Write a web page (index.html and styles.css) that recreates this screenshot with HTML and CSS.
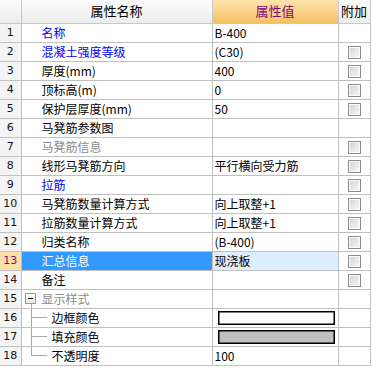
FILE: index.html
```html
<!DOCTYPE html>
<html>
<head>
    <title>属性编辑</title>
    <link rel="stylesheet" href="styles.css">
</head>
<body>
    <table class="grid">
        <colgroup>
            <col class="c-no">
            <col class="c-name">
            <col class="c-val">
            <col class="c-add">
        </colgroup>
        <thead>
            <tr>
                <th class="h-no"></th>
                <th class="h-name">属性名称</th>
                <th class="h-val">属性值</th>
                <th class="h-add">附加</th>
            </tr>
        </thead>
        <tbody>
            <tr><td class="no">1</td><td class="name blue">名称</td><td class="val">B-400</td><td class="add"></td></tr>
            <tr><td class="no">2</td><td class="name blue">混凝土强度等级</td><td class="val">(C30)</td><td class="add"><span class="chk"></span></td></tr>
            <tr><td class="no">3</td><td class="name">厚度(mm)</td><td class="val">400</td><td class="add"><span class="chk"></span></td></tr>
            <tr><td class="no">4</td><td class="name">顶标高(m)</td><td class="val">0</td><td class="add"><span class="chk"></span></td></tr>
            <tr><td class="no">5</td><td class="name">保护层厚度(mm)</td><td class="val">50</td><td class="add"><span class="chk"></span></td></tr>
            <tr><td class="no">6</td><td class="name">马凳筋参数图</td><td class="val"></td><td class="add"></td></tr>
            <tr><td class="no">7</td><td class="name gray">马凳筋信息</td><td class="val"></td><td class="add"><span class="chk"></span></td></tr>
            <tr><td class="no">8</td><td class="name">线形马凳筋方向</td><td class="val">平行横向受力筋</td><td class="add"><span class="chk"></span></td></tr>
            <tr><td class="no">9</td><td class="name blue">拉筋</td><td class="val"></td><td class="add"><span class="chk"></span></td></tr>
            <tr><td class="no">10</td><td class="name">马凳筋数量计算方式</td><td class="val">向上取整+1</td><td class="add"><span class="chk"></span></td></tr>
            <tr><td class="no">11</td><td class="name">拉筋数量计算方式</td><td class="val">向上取整+1</td><td class="add"><span class="chk"></span></td></tr>
            <tr><td class="no">12</td><td class="name">归类名称</td><td class="val">(B-400)</td><td class="add"><span class="chk"></span></td></tr>
            <tr class="sel"><td class="no">13</td><td class="name">汇总信息</td><td class="val">现浇板</td><td class="add"><span class="chk"></span></td></tr>
            <tr><td class="no">14</td><td class="name">备注</td><td class="val"></td><td class="add"><span class="chk"></span></td></tr>
            <tr><td class="no">15</td><td class="name gray group"><span class="tree-box"></span><span class="tree-down"></span>显示样式</td><td class="val"></td><td class="add"></td></tr>
            <tr><td class="no">16</td><td class="name child"><span class="tree-line"></span>边框颜色</td><td class="val"><span class="swatch"></span></td><td class="add"></td></tr>
            <tr><td class="no">17</td><td class="name child"><span class="tree-line"></span>填充颜色</td><td class="val"><span class="swatch fill"></span></td><td class="add"></td></tr>
            <tr><td class="no">18</td><td class="name child last"><span class="tree-line"></span>不透明度</td><td class="val">100</td><td class="add"></td></tr>
        </tbody>
    </table>
</body>
</html>
```

FILE: styles.css
```css
* {
    margin: 0;
    padding: 0;
    box-sizing: border-box;
}
body {
    background: #fff;
    font-family: "Noto Sans CJK SC", "DejaVu Sans", sans-serif;
    font-size: 12px;
    color: #000;
}
.grid {
    border-collapse: collapse;
    table-layout: fixed;
    width: 370px;
}
.c-no { width: 21px; }
.c-name { width: 191px; }
.c-val { width: 126px; }
.c-add { width: 32px; }

.grid th {
    height: 23px;
    font-weight: normal;
    font-size: 13px;
    border-right: 1px solid #c8c8c8;
    border-bottom: 1px solid #c8c8c8;
    background: linear-gradient(#fbfbfb, #ececec);
    text-align: center;
    line-height: 20px;
}
.grid th.h-val {
    background: linear-gradient(#fde4ad, #f4c163);
    color: #7a0a7a;
}
.grid td {
    height: 19px;
    border-right: 1px solid #c0c0c0;
    border-bottom: 1px solid #c0c0c0;
    white-space: nowrap;
    overflow: hidden;
    line-height: 17px;
    position: relative;
}
.no {
    background: #f4f4f4;
    text-align: center;
    font-family: "DejaVu Sans", sans-serif;
    font-size: 11px;
    color: #111;
}
.name {
    padding-left: 20px;
}
.name.blue { color: #0000ff; }
.name.gray { color: #8a8a8a; }
.val {
    padding-left: 2px;
}
.add {
    text-align: center;
}
.chk {
    display: inline-block;
    width: 13px;
    height: 13px;
    margin-top: 3px;
    vertical-align: top;
    border: 1px solid #8c8c8c;
    background: linear-gradient(135deg, #d4d4d4, #f8f8f8);
    box-shadow: inset 0 0 0 1px #fafafa;
}

.sel .no {
    background: #fde0a4;
    color: #7a0a7a;
}
.sel .name {
    background: #3399ff;
    color: #fff;
}
.sel .val {
    background: #deeeff;
}

.group .tree-box {
    position: absolute;
    left: 3px;
    top: 3px;
    width: 11px;
    height: 11px;
    border: 1px solid #9a9a9a;
    background: linear-gradient(#fff, #e4e4e4);
}
.group .tree-box::after {
    content: "";
    position: absolute;
    left: 2px;
    top: 4px;
    width: 5px;
    height: 1px;
    background: #000;
}
.group .tree-down {
    position: absolute;
    left: 9px;
    top: 14px;
    bottom: -1px;
    border-left: 1px solid #a8a8a8;
}
.child {
    padding-left: 30px;
}
.child .tree-line {
    position: absolute;
    left: 9px;
    top: -1px;
    bottom: -1px;
    width: 15px;
    border-left: 1px solid #a8a8a8;
}
.child .tree-line::after {
    content: "";
    position: absolute;
    left: 0;
    top: 9px;
    width: 15px;
    border-top: 1px solid #a8a8a8;
}
.child.last .tree-line {
    bottom: auto;
    height: 10px;
}

.swatch {
    display: block;
    margin: 0 3px 0 3px;
    height: 14px;
    border: 1px solid #000;
    box-shadow: inset 0 0 0 0.5px #000;
    background: #fff;
}
.swatch.fill {
    background: #c0c0c0;
}
```
